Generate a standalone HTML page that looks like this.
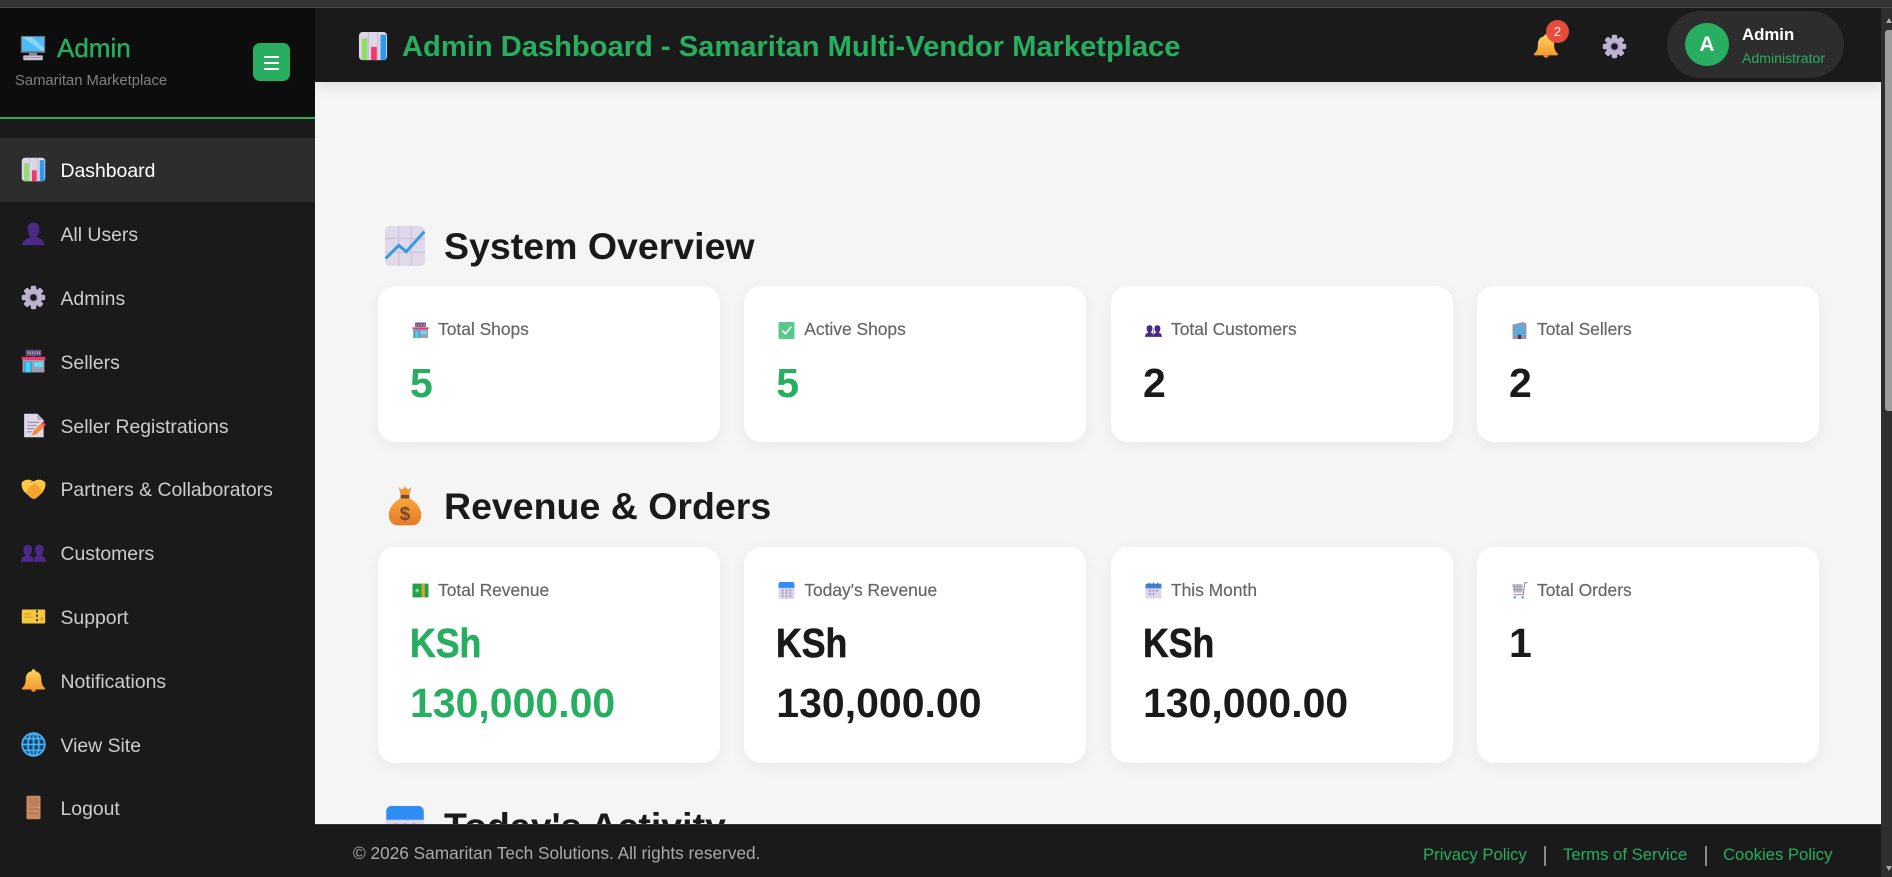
<!DOCTYPE html>
<html lang="en"><head><meta charset="utf-8"><title>Admin Dashboard</title>
<style>
html,body{margin:0;padding:0;width:1892px;height:877px;overflow:hidden;background:#f5f5f5;font-family:"Liberation Sans",sans-serif}
*{box-sizing:border-box}
.abs,.t,svg.i{position:absolute}
.t{white-space:nowrap;line-height:1}
#strip{position:absolute;left:0;top:0;width:1892px;height:8px;background:#333;border-bottom:1px solid #4a4a4a;z-index:9}
#side{position:absolute;left:0;top:8px;width:315px;height:869px;background:#1a1a1a;z-index:5}
#brand{position:absolute;left:0;top:0;width:315px;height:111px;background:#0d0d0d;border-bottom:2px solid #27ae60}
#toggle{position:absolute;left:253px;top:35px;width:37px;height:38px;border-radius:7px;background:#27ae60}
#toggle i{position:absolute;left:11px;width:15px;height:2px;background:#fff}
nav{position:absolute;left:0;top:130px;width:315px}
nav a{display:flex;align-items:center;height:63.8px;padding-left:21px;color:#ccc;font-size:19.4px;text-decoration:none}
nav a.on{background:#2d2d2d;color:#fff}
nav a svg{width:25px;height:25px;margin-right:14.5px;flex:none}
nav a span{padding-top:4px}
#top{position:absolute;left:315px;top:8px;width:1566px;height:74px;background:#1a1a1a;z-index:4;box-shadow:0 3px 14px rgba(0,0,0,.12)}
#sb{position:absolute;left:1881px;top:8px;width:11px;height:869px;background:#2e2e2e;z-index:6}
#thumb{position:absolute;left:4px;top:22px;width:7px;height:381px;background:#9e9e9e;border-radius:3px 0 0 3px}
.card{position:absolute;width:342px;background:#fff;border-radius:17px;box-shadow:0 4px 15px rgba(0,0,0,.05)}
.r1{top:286px;height:156px}.r2{top:547px;height:216px}
.lab{position:absolute;left:60px;font-size:17.4px;line-height:1;color:#666;white-space:nowrap;-webkit-text-stroke:.2px #666}
.r1 .lab{top:35.4px}.r2 .lab{top:34.9px}
.card svg{position:absolute;left:33.5px;width:17px;height:17px}
.r1 svg{top:36px}.r2 svg{top:35px}
.val{position:absolute;left:32px;font:bold 41px/60.5px "Liberation Sans",sans-serif;color:#1a1a1a;white-space:nowrap}
.r1 .val{top:66.5px}.r2 .val{top:65.6px}
.g{color:#27ae60!important}
.ksh{display:inline-block;transform:scaleX(.87);transform-origin:0 50%;-webkit-text-stroke:.6px currentColor}
h2{position:absolute;left:444px;margin:0;font:bold 37.5px/1 "Liberation Sans",sans-serif;color:#1a1a1a;white-space:nowrap}
#foot{position:absolute;left:315px;top:824px;width:1566px;height:53px;background:#1a1a1a;border-top:1px solid #333;z-index:4}
#foot a{position:absolute;top:22px;color:#27ae60;font-size:16.7px;line-height:1;text-decoration:none;white-space:nowrap}
#foot i{position:absolute;top:21px;width:1.5px;height:20px;background:#8a8a8a}
</style></head><body>
<svg width="0" height="0" style="position:absolute"><defs>
<linearGradient id="gb" x1="0" y1="0" x2="0" y2="1"><stop offset="0" stop-color="#ffd45e"/><stop offset="1" stop-color="#f59a32"/></linearGradient>
<linearGradient id="gm" x1="0" y1="0" x2="0" y2="1"><stop offset="0" stop-color="#f8a53a"/><stop offset="1" stop-color="#e57a2a"/></linearGradient>
<symbol id="monitor" viewBox="0 0 32 32"><rect x="1" y="1" width="30" height="21" rx="1" fill="#6d7480"/><rect x="2.500" y="2.500" width="27" height="17.500" fill="#4cbcf6"/><path d="M2.500 2.500h12l15 13V20h-2z" fill="#8ad6fb"/><rect x="11" y="22" width="10" height="3" fill="#8e8a99"/><rect x="4" y="25" width="24" height="6" rx="1" fill="#c9c3d4"/><path d="M6 27.500h20" stroke="#9a95a6"/></symbol>
<symbol id="chart" viewBox="0 0 32 32"><rect x="1" y="1" width="30" height="30" rx="4" fill="#ddd7e6"/><path d="M11 1v30M21 1v30" stroke="#c2bad0"/><rect x="4" y="8" width="6" height="23" fill="#8ede6c"/><rect x="14" y="17" width="6" height="14" fill="#f1376f"/><rect x="24" y="4" width="6" height="27" fill="#2b9bf0"/></symbol>
<symbol id="user" viewBox="0 0 32 32"><path d="M16 2c5 0 7.500 3 7.500 8s-2.500 9-4 10.500c4 1.500 10 3.500 11 10.500H1.500C2.500 24 8.500 22 12.500 20.500 11 19 8.500 15 8.500 10S11 2 16 2z" fill="#4b2a87"/></symbol>
<symbol id="gear" viewBox="0 0 32 32"><g fill="#bdb2d0"><rect x="12.500" y="1" width="7" height="9" rx="2"/><rect x="12.500" y="1" width="7" height="9" rx="2" transform="rotate(45 16 16)"/><rect x="12.500" y="1" width="7" height="9" rx="2" transform="rotate(90 16 16)"/><rect x="12.500" y="1" width="7" height="9" rx="2" transform="rotate(135 16 16)"/><rect x="12.500" y="1" width="7" height="9" rx="2" transform="rotate(180 16 16)"/><rect x="12.500" y="1" width="7" height="9" rx="2" transform="rotate(225 16 16)"/><rect x="12.500" y="1" width="7" height="9" rx="2" transform="rotate(270 16 16)"/><rect x="12.500" y="1" width="7" height="9" rx="2" transform="rotate(315 16 16)"/><circle cx="16" cy="16" r="11"/></g><circle cx="16" cy="16" r="6" fill="#a99dc0"/><circle cx="16" cy="16" r="4.200" fill="#1b1a20"/></symbol>
<symbol id="shop" viewBox="0 0 32 32"><rect x="6" y="1" width="20" height="8" fill="#5d4d78"/><path d="M9 3v4M12 3v4M15 3v4M18 3v4M21 3v4M24 3v4" stroke="#cfc8dc"/><path d="M15.500 9v2" stroke="#5d4d78" stroke-width="1.500"/><rect x="1" y="10" width="30" height="4" fill="#f1396f"/><rect x="2" y="14" width="28" height="16" fill="#a39cb0"/><rect x="4" y="16" width="10" height="14" fill="#2f9fdc"/><rect x="6" y="17" width="6" height="13" fill="#49d2f5"/><rect x="17" y="17" width="11" height="6" fill="#5fe0f6"/></symbol>
<symbol id="memo" viewBox="0 0 32 32"><path d="M4 1h17l8 8v22H4z" fill="#ded8e8"/><path d="M21 1l8 8h-8z" fill="#b7aec6"/><path d="M8 12h15M8 16h12M8 20h9M8 24h6" stroke="#9d95ad" stroke-width="1.500"/><path d="M14 29l2-6L26 13l4 4-10 10z" fill="#f4873a"/><path d="M26 13l2-2 4 4-2 2z" fill="#f0385f"/></symbol>
<symbol id="shake" viewBox="0 0 32 32"><path d="M1 8c3-3 8-4 11-3l4 2 4-2c3-1 8 0 11 3 1 5-1 10-4 13l-8 7c-2 1.500-4 1.500-6 0l-8-7C2 18 0 13 1 8z" fill="#ffc83d"/><path d="M12 5l4 2 5 5 7 9-8 7c-2 1.500-4 1.500-6 0l-8-7C13 16 11 10 12 5z" fill="#f6a22f"/><path d="M9 12c3 0 5-3 8-3" stroke="#ffdf7a" stroke-width="2" fill="none"/></symbol>
<symbol id="users" viewBox="0 0 32 32"><g fill="#4b2a87"><path d="M9 4c3.500 0 5 2.500 5 6s-1.500 6-3 8c3 1 4.500 2 5 8H0c.5-6 3-7 6-8-1.500-2-3-4.500-3-8s2-6 6-6z" transform="translate(0 2)"/><path d="M23 4c3.500 0 6 2.500 6 6s-1.500 6-3 8c3 1 5.500 2 6 8H16c.5-6 2-7 5-8-1.500-2-3-4.500-3-8s1.500-6 5-6z" transform="translate(0 2)"/></g><path d="M16 12v16" stroke="#2e1a55"/></symbol>
<symbol id="ticket" viewBox="0 0 32 32"><rect x="1" y="7" width="30" height="18" rx="1.500" fill="#f6c83f"/><path d="M4 12h9v1.500H4zM4 16h12v1.500H4z" fill="#dd9c2a"/><rect x="25" y="17" width="3" height="4" fill="#e89034"/><path d="M20.500 8v16" stroke="#1a1a1a" stroke-width="2" stroke-dasharray="3 2.500"/></symbol>
<symbol id="bell" viewBox="0 0 32 32"><path d="M16 1.500c1.400 0 2.200 1 2.200 2.500C23.500 5 26 9 26 14c0 5 1 8.500 4.500 11.500.8.8.3 2-1 2h-27c-1.300 0-1.800-1.200-1-2C5 22.500 6 19 6 14c0-5 2.500-9 7.800-10 0-1.500.8-2.500 2.200-2.500z" fill="url(#gb)"/><path d="M13 27.500h6c0 2-1.300 3-3 3s-3-1-3-3z" fill="#e8862b"/></symbol>
<symbol id="globe" viewBox="0 0 32 32"><circle cx="16" cy="16" r="14.500" fill="#19405f"/><g fill="none" stroke="#43b0f5" stroke-width="2.300"><circle cx="16" cy="16" r="14.500"/><ellipse cx="16" cy="16" rx="7" ry="14.500"/><path d="M16 1.500v29M1.500 16h29M4 8.500h24M4 23.500h24"/></g></symbol>
<symbol id="door" viewBox="0 0 32 32"><rect x="7" y="1" width="18" height="30" rx="1.500" fill="#c98a62"/><path d="M9.500 13h13M9.500 18h13M9.500 24h13" stroke="#a9663f" stroke-width="1"/><rect x="9.500" y="3.500" width="13" height="8" fill="#bd7f58"/><circle cx="22.500" cy="16" r="1" fill="#f0b050"/></symbol>
<symbol id="trend" viewBox="0 0 32 32"><rect x="0" y="0" width="32" height="32" rx="4" fill="#e0d9ea"/><path d="M11 0v32M21 0v32M0 10h32M0 21h32" stroke="#cdc4da" stroke-width="1"/><path d="M.5 26L11 15.500l6 5L31.500 4.500" stroke="#2f9ae6" stroke-width="2.300" fill="none"/></symbol>
<symbol id="bag" viewBox="0 0 32 32"><path d="M11 1l2.500 2L16 .5 18.500 3 21 1l-1.500 6h-7z" fill="#f29a35"/><rect x="12.500" y="7" width="7" height="3" fill="#7a4a2e"/><path d="M12 10h8c5 3 9 8 9 13 0 5-3 8.500-7 8.500H10c-4 0-7-3.500-7-8.500 0-5 4-10 9-13z" fill="url(#gm)"/><text x="16" y="27" font-family="Liberation Sans,sans-serif" font-size="15" font-weight="bold" text-anchor="middle" fill="#7a4528">$</text></symbol>
<symbol id="check" viewBox="0 0 32 32"><rect x="1" y="0" width="30" height="32" rx="3" fill="#58c98c"/><path d="M8 16l6 6L25 9" stroke="#fff" stroke-width="3" fill="none"/></symbol>
<symbol id="building" viewBox="0 0 32 32"><path d="M3 5l20-5 6 3v29H3z" fill="#9a93a8"/><rect x="7" y="6" width="18" height="21" fill="#48bdf0"/><path d="M11.500 6v21M16 6v21M20.500 6v21M7 11h18M7 16h18M7 21h18" stroke="#7f8fb0"/><rect x="13" y="24" width="6" height="8" fill="#3e3a4c"/></symbol>
<symbol id="note" viewBox="0 0 32 32"><rect x="1" y="3" width="30" height="26" fill="#1fa34a"/><rect x="18" y="3" width="6" height="26" fill="#e5a12c"/><circle cx="10" cy="16" r="3.500" fill="#7cd78a"/></symbol>
<symbol id="cal" viewBox="0 0 32 32"><rect x="1" y="0" width="30" height="32" rx="4" fill="#ddd5ec"/><path d="M1 11V4a4 4 0 0 1 4-4h22a4 4 0 0 1 4 4v7z" fill="#2f8cf5"/><g fill="#a79dbd"><rect x="7" y="14" width="3.500" height="3.500"/><rect x="14.200" y="14" width="3.500" height="3.500"/><rect x="21.500" y="14" width="3.500" height="3.500"/><rect x="7" y="19.500" width="3.500" height="3.500"/><rect x="14.200" y="19.500" width="3.500" height="3.500"/><rect x="21.500" y="19.500" width="3.500" height="3.500"/><rect x="7" y="25" width="3.500" height="3.500"/><rect x="14.200" y="25" width="3.500" height="3.500"/><rect x="21.500" y="25" width="3.500" height="3.500"/></g></symbol>
<symbol id="month" viewBox="0 0 32 32"><rect x="1" y="3" width="30" height="28" rx="2" fill="#ddd5ec"/><path d="M1 12V5a2 2 0 0 1 2-2h26a2 2 0 0 1 2 2v7z" fill="#3d7fd9"/><path d="M8 1v5M16 1v5M24 1v5" stroke="#5a5470" stroke-width="1.500"/><g fill="#8d84a6"><rect x="8" y="15" width="3" height="3"/><rect x="14.500" y="15" width="3" height="3"/><rect x="21" y="15" width="3" height="3"/><rect x="8" y="21" width="3" height="3"/><rect x="14.500" y="21" width="3" height="3"/></g></symbol>
<symbol id="cart" viewBox="0 0 32 32"><path d="M2 4h20v16H5z" fill="#c9c3d2"/><path d="M7 4v16M12 4v16M17 4v16M3 9h19M4 14h18" stroke="#8d8799"/><path d="M31 1l-5 1-3 22H5" stroke="#8d8799" stroke-width="2" fill="none"/><circle cx="7" cy="29" r="2.200" fill="#3d8fe0"/><circle cx="22" cy="29" r="2.200" fill="#3d8fe0"/></symbol>
</defs></svg>

<div id="strip"></div>

<aside id="side">
  <div id="brand">
    <svg class="i" style="left:20px;top:27px;width:26px;height:26px"><use href="#monitor"/></svg>
    <div class="t g" style="left:57px;top:27px;font-size:26px;-webkit-text-stroke:.4px #27ae60">Admin</div>
    <div class="t" style="left:15px;top:65.500px;font-size:14.800px;color:#808080">Samaritan Marketplace</div>
    <div id="toggle"><i style="top:13px"></i><i style="top:19px"></i><i style="top:25px"></i></div>
  </div>
  <nav>
    <a class="on"><svg><use href="#chart"/></svg><span>Dashboard</span></a>
    <a><svg><use href="#user"/></svg><span>All Users</span></a>
    <a><svg><use href="#gear"/></svg><span>Admins</span></a>
    <a><svg><use href="#shop"/></svg><span>Sellers</span></a>
    <a><svg><use href="#memo"/></svg><span>Seller Registrations</span></a>
    <a><svg><use href="#shake"/></svg><span>Partners &amp; Collaborators</span></a>
    <a><svg><use href="#users"/></svg><span>Customers</span></a>
    <a><svg><use href="#ticket"/></svg><span>Support</span></a>
    <a><svg><use href="#bell"/></svg><span>Notifications</span></a>
    <a><svg><use href="#globe"/></svg><span>View Site</span></a>
    <a><svg><use href="#door"/></svg><span>Logout</span></a>
  </nav>
</aside>

<header id="top">
  <svg class="i" style="left:43px;top:23px;width:30px;height:30px"><use href="#chart"/></svg>
  <div class="t g" style="left:87px;top:25.300px;font-size:29.130px;font-weight:bold">Admin Dashboard - Samaritan Multi-Vendor Marketplace</div>
  <svg class="i" style="left:1218px;top:25px;width:26px;height:26px"><use href="#bell"/></svg>
  <div class="abs" style="left:1231px;top:12px;width:23px;height:23px;border-radius:50%;background:#e74c3c;color:#fff;font-size:13px;line-height:23px;text-align:center">2</div>
  <svg class="i" style="left:1287px;top:26px;width:25px;height:25px"><use href="#gear"/></svg>
  <div class="abs" style="left:1352px;top:3px;width:177px;height:67px;border-radius:34px;background:#2d2d2d"></div>
  <div class="abs" style="left:1370px;top:15px;width:44px;height:43px;border-radius:50%;background:#27ae60;color:#fff;font-size:21px;font-weight:bold;line-height:44px;text-align:center">A</div>
  <div class="t" style="left:1427px;top:18.600px;font-size:16.800px;font-weight:bold;color:#fff">Admin</div>
  <div class="t g" style="left:1427px;top:43px;font-size:14.100px">Administrator</div>
</header>

<main>
  <svg class="i" style="left:385px;top:226px;width:40px;height:40px"><use href="#trend"/></svg>
  <h2 style="top:228.300px">System Overview</h2>
  <div class="card r1" style="left:378px"><svg><use href="#shop"/></svg><div class="lab">Total Shops</div><div class="val g">5</div></div>
  <div class="card r1" style="left:744.300px"><svg><use href="#check"/></svg><div class="lab">Active Shops</div><div class="val g">5</div></div>
  <div class="card r1" style="left:1111px"><svg><use href="#users"/></svg><div class="lab">Total Customers</div><div class="val">2</div></div>
  <div class="card r1" style="left:1477px"><svg><use href="#building"/></svg><div class="lab">Total Sellers</div><div class="val">2</div></div>

  <svg class="i" style="left:385px;top:486px;width:40px;height:40px"><use href="#bag"/></svg>
  <h2 style="top:488.300px">Revenue &amp; Orders</h2>
  <div class="card r2" style="left:378px"><svg><use href="#note"/></svg><div class="lab">Total Revenue</div><div class="val g"><span class="ksh">KSh</span><br>130,000.00</div></div>
  <div class="card r2" style="left:744.300px"><svg><use href="#cal"/></svg><div class="lab">Today's Revenue</div><div class="val"><span class="ksh">KSh</span><br>130,000.00</div></div>
  <div class="card r2" style="left:1111px"><svg><use href="#month"/></svg><div class="lab">This Month</div><div class="val"><span class="ksh">KSh</span><br>130,000.00</div></div>
  <div class="card r2" style="left:1477px"><svg><use href="#cart"/></svg><div class="lab">Total Orders</div><div class="val">1</div></div>

  <svg class="i" style="left:385px;top:806px;width:40px;height:40px"><use href="#cal"/></svg>
  <h2 style="top:808.300px">Today's Activity</h2>
</main>

<footer id="foot">
  <div class="t" style="left:38px;top:19.700px;font-size:17.250px;color:#aaa">© 2026 Samaritan Tech Solutions. All rights reserved.</div>
  <a style="left:1108px">Privacy Policy</a><i style="left:1229px"></i>
  <a style="left:1248px">Terms of Service</a><i style="left:1390px"></i>
  <a style="left:1408px">Cookies Policy</a>
</footer>

<div id="sb">
  <div class="abs" style="left:5px;top:10px;width:0;height:0;border-left:3px solid transparent;border-right:3px solid transparent;border-bottom:5px solid #aaa"></div>
  <div id="thumb"></div>
  <div class="abs" style="left:5px;top:858px;width:0;height:0;border-left:3px solid transparent;border-right:3px solid transparent;border-top:5px solid #aaa"></div>
</div>
</body></html>
